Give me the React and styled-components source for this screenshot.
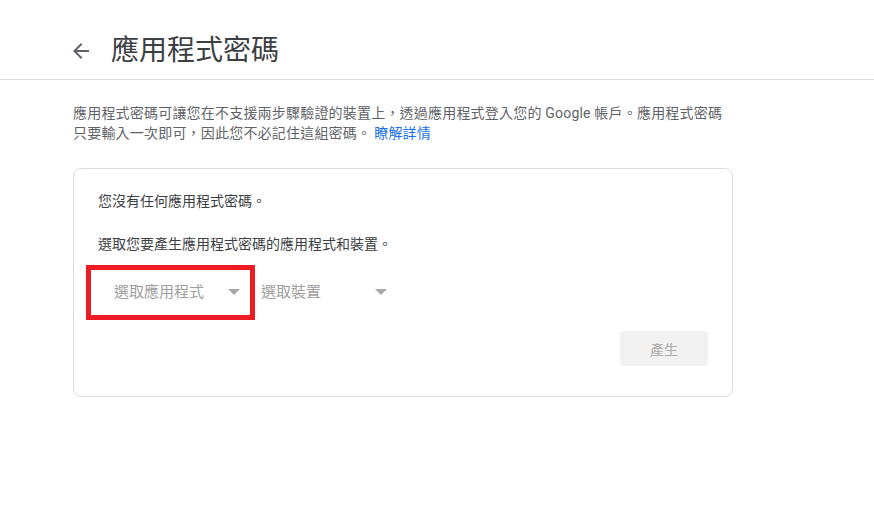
import React from "react";
import styled, { createGlobalStyle } from "styled-components";

const GlobalStyle = createGlobalStyle`
  body {
    margin: 0;
    background: #fff;
    font-family: Roboto, "Noto Sans CJK TC", sans-serif;
  }
`;

const Header = styled.header`
  display: flex;
  align-items: center;
  gap: 18px;
  box-sizing: border-box;
  height: 80px;
  padding: 33px 0 10px 69px;
  border-bottom: 1px solid #dadce0;
`;

const BackButton = styled.div`
  width: 24px;
  height: 24px;
  display: flex;
  color: #5f6368;
`;

const Title = styled.h1`
  margin: 0;
  font-size: 28px;
  font-weight: 400;
  line-height: 36px;
  color: #3c4043;
`;

const Main = styled.main`
  padding: 23px 0 0 73px;
`;

const Description = styled.p`
  margin: 0;
  font-size: 14px;
  line-height: 20px;
  letter-spacing: 0.2px;
  color: #5f6368;
  white-space: nowrap;

  a {
    color: #1a73e8;
    text-decoration: none;
    margin-left: 3px;
  }
`;

const Card = styled.section`
  width: 660px;
  box-sizing: border-box;
  margin-top: 25px;
  padding: 22px 24px 30px;
  border: 1px solid #dadce0;
  border-radius: 8px;
  display: flex;
  flex-direction: column;
`;

const CardText = styled.p`
  margin: ${(p) => (p.$first ? "0" : "23px 0 0")};
  font-size: 14px;
  line-height: 20px;
  color: #3c4043;
`;

const SelectRow = styled.div`
  display: flex;
  gap: 10px;
  margin-top: 20px;
  padding-left: 16px;
`;

const Select = styled.div`
  position: relative;
  width: 137px;
  height: 36px;
  box-sizing: border-box;
  padding: 0 11px 3px 0;
  display: flex;
  align-items: center;
  justify-content: space-between;
  font-size: 15px;
  color: #9e9e9e;
  cursor: pointer;

  ${(p) =>
    p.$highlighted &&
    `
    &::after {
      content: "";
      position: absolute;
      top: -9px;
      bottom: -10px;
      left: -28px;
      right: -4px;
      border: 5px solid #ed1c24;
      pointer-events: none;
    }
  `}
`;

const Caret = styled.span`
  width: 0;
  height: 0;
  margin-top: 2px;
  border-left: 6px solid transparent;
  border-right: 6px solid transparent;
  border-top: 6px solid #a8a8a8;
`;

const Actions = styled.div`
  display: flex;
  justify-content: flex-end;
  margin-top: 21px;
`;

const GenerateButton = styled.button`
  width: 88px;
  height: 35px;
  border: none;
  border-radius: 4px;
  background: #f1f1f1;
  color: #ababab;
  font-family: inherit;
  font-size: 14px;
`;

function ArrowBack() {
  return (
    <svg width="24" height="24" viewBox="0 0 24 24" fill="currentColor">
      <path d="M20 11H7.83l5.59-5.59L12 4l-8 8 8 8 1.41-1.41L7.83 13H20v-2z" />
    </svg>
  );
}

function Dropdown({ label, highlighted }) {
  return (
    <Select $highlighted={highlighted}>
      <span>{label}</span>
      <Caret />
    </Select>
  );
}

export default function App() {
  return (
    <>
      <GlobalStyle />
      <Header>
        <BackButton>
          <ArrowBack />
        </BackButton>
        <Title>應用程式密碼</Title>
      </Header>
      <Main>
        <Description>
          應用程式密碼可讓您在不支援兩步驟驗證的裝置上，透過應用程式登入您的 Google 帳戶。應用程式密碼
          <br />
          只要輸入一次即可，因此您不必記住這組密碼。
          <a href="#">瞭解詳情</a>
        </Description>
        <Card>
          <CardText $first>您沒有任何應用程式密碼。</CardText>
          <CardText>選取您要產生應用程式密碼的應用程式和裝置。</CardText>
          <SelectRow>
            <Dropdown label="選取應用程式" highlighted />
            <Dropdown label="選取裝置" />
          </SelectRow>
          <Actions>
            <GenerateButton disabled>產生</GenerateButton>
          </Actions>
        </Card>
      </Main>
    </>
  );
}
